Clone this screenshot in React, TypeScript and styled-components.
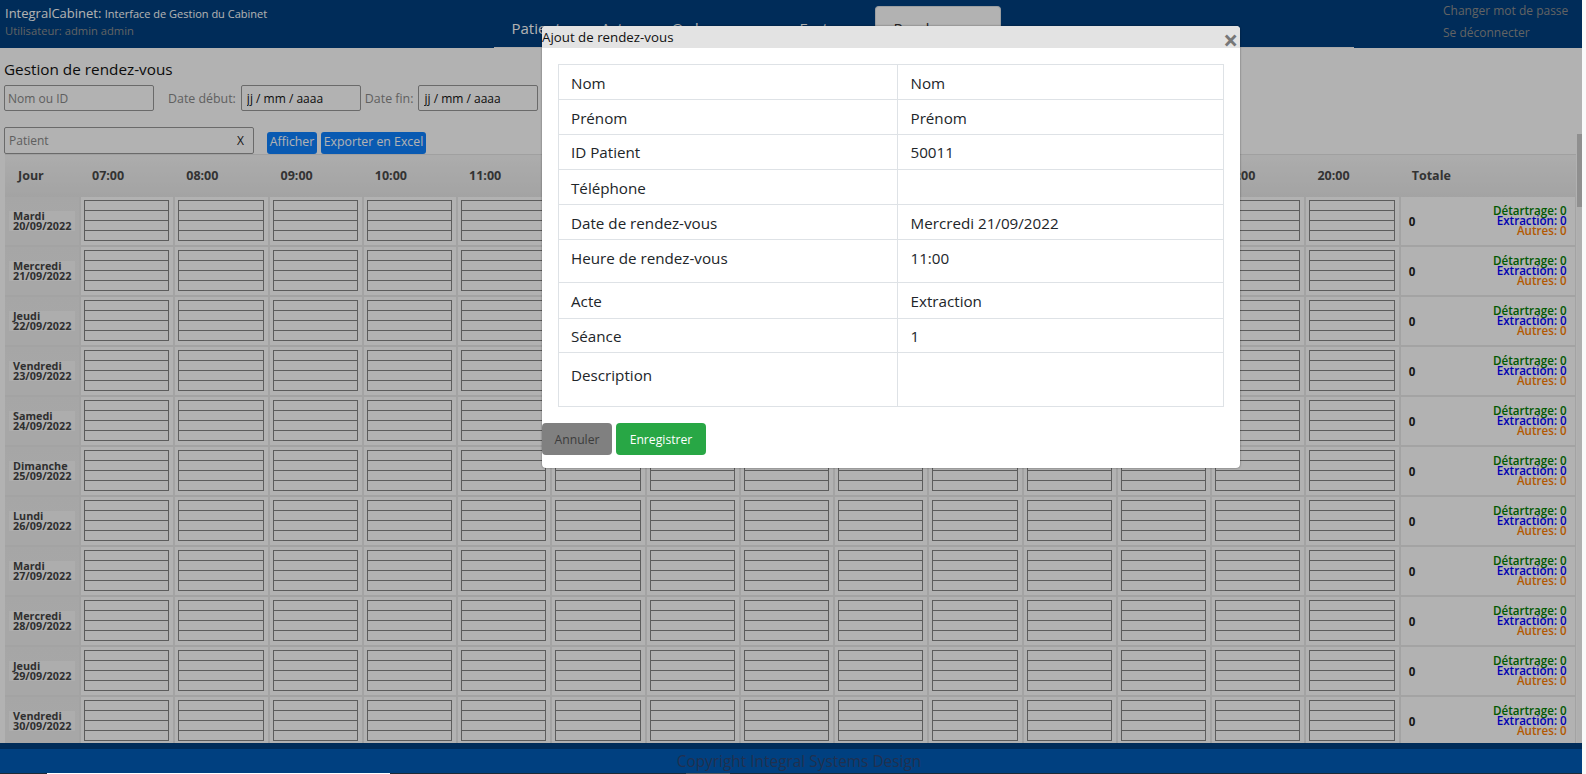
import styled, { createGlobalStyle } from 'styled-components';

const hours = ['07:00', '08:00', '09:00', '10:00', '11:00', '12:00', '13:00', '14:00', '15:00', '16:00', '17:00', '18:00', '19:00', '20:00'];

const days = [
  ['Mardi', '20/09/2022'],
  ['Mercredi', '21/09/2022'],
  ['Jeudi', '22/09/2022'],
  ['Vendredi', '23/09/2022'],
  ['Samedi', '24/09/2022'],
  ['Dimanche', '25/09/2022'],
  ['Lundi', '26/09/2022'],
  ['Mardi', '27/09/2022'],
  ['Mercredi', '28/09/2022'],
  ['Jeudi', '29/09/2022'],
  ['Vendredi', '30/09/2022'],
];

const navItems = ['Patients', 'Actes', 'Ordonnances', 'Factures'];

const details = [
  { label: 'Nom', value: 'Nom', height: 35, top: 8 },
  { label: 'Prénom', value: 'Prénom', height: 35, top: 8 },
  { label: 'ID Patient', value: '50011', height: 35, top: 7 },
  { label: 'Téléphone', value: '', height: 35, top: 8 },
  { label: 'Date de rendez-vous', value: 'Mercredi 21/09/2022', height: 35, top: 8 },
  { label: 'Heure de rendez-vous', value: '11:00', height: 43, top: 8 },
  { label: 'Acte', value: 'Extraction', height: 36, top: 8 },
  { label: 'Séance', value: '1', height: 34, top: 7 },
  { label: 'Description', value: '', height: 54, top: 12 },
];

const GlobalStyle = createGlobalStyle`
  html, body {
    margin: 0;
    height: 100%;
    overflow: hidden;
    background: #fafafa;
  }
  body, input, button {
    font-family: "Open Sans", "Noto Sans", "Liberation Sans", sans-serif;
  }
  * {
    box-sizing: border-box;
  }
`;

export default function App() {
  return (
    <>
      <GlobalStyle />
      <Page>
        <Header>
          <Brand>
            <BrandTitle>
              IntegralCabinet: <small>Interface de Gestion du Cabinet</small>
            </BrandTitle>
            <BrandUser>Utilisateur: admin admin</BrandUser>
          </Brand>
          <Nav>
            {navItems.map((item) => (
              <NavItem key={item}>{item}</NavItem>
            ))}
            <NavTab>Rendez-vous</NavTab>
          </Nav>
          <UserLinks>
            <span>Changer mot de passe</span>
            <span>Se déconnecter</span>
          </UserLinks>
        </Header>

        <Content>
          <PageTitle>Gestion de rendez-vous</PageTitle>
          <FilterRow>
            <Field $width={150} placeholder="Nom ou ID" />
            <FilterLabel $left={14}>Date début:</FilterLabel>
            <Field $width={120} $left={5} readOnly value="jj / mm / aaaa" />
            <FilterLabel $left={4}>Date fin:</FilterLabel>
            <Field $width={120} $left={5} readOnly value="jj / mm / aaaa" />
          </FilterRow>
          <ActionRow>
            <PatientBox>
              <span>Patient</span>
              <em>X</em>
            </PatientBox>
            <BlueButton $width={50}>Afficher</BlueButton>
            <BlueButton $width={105}>Exporter en Excel</BlueButton>
          </ActionRow>

          <Planning>
            <HeadRow>
              <HeadCell $pad={13}>Jour</HeadCell>
              {hours.map((hour) => (
                <HeadCell key={hour} $pad={13}>
                  {hour}
                </HeadCell>
              ))}
              <HeadCell $pad={13}>Totale</HeadCell>
            </HeadRow>
            {days.map(([name, date]) => (
              <DayRow key={date}>
                <DayCell>
                  <DayLabel>
                    {name}
                    <br />
                    {date}
                  </DayLabel>
                </DayCell>
                {hours.map((hour) => (
                  <SlotCell key={hour}>
                    <SlotBox>
                      <i />
                      <i />
                      <i />
                      <i />
                    </SlotBox>
                  </SlotCell>
                ))}
                <TotalCell>
                  <b>0</b>
                  <Stats>
                    <Stat $color="#008000">Détartrage: 0</Stat>
                    <Stat $color="#0000ff">Extraction: 0</Stat>
                    <Stat $color="#ff8000">Autres: 0</Stat>
                  </Stats>
                </TotalCell>
              </DayRow>
            ))}
          </Planning>

          <ScrollTrack>
            <ScrollArrow />
            <ScrollThumb />
          </ScrollTrack>
        </Content>

        <Footer>Copyright Integral Systems Design</Footer>
        <TaskStrip>
          <TaskWhite />
          <TaskGrey />
        </TaskStrip>

        <Backdrop />
        <Modal>
          <ModalHead>
            Ajout de rendez-vous
            <CloseMark>×</CloseMark>
          </ModalHead>
          <ModalBody>
            <DetailTable>
              <tbody>
                {details.map((row) => (
                  <DetailRow key={row.label} $height={row.height} $top={row.top}>
                    <td>{row.label}</td>
                    <td>{row.value}</td>
                  </DetailRow>
                ))}
              </tbody>
            </DetailTable>
          </ModalBody>
          <ModalActions>
            <CancelButton>Annuler</CancelButton>
            <SaveButton>Enregistrer</SaveButton>
          </ModalActions>
        </Modal>
      </Page>
    </>
  );
}

const Page = styled.div`
  position: relative;
  display: flex;
  flex-direction: column;
  width: 1582px;
  height: 774px;
  background: #fff;
  overflow: hidden;
`;

const Header = styled.header`
  display: flex;
  flex: 0 0 47px;
  background: #004080;
`;

const Brand = styled.div`
  flex: 0 0 494px;
  padding: 4px 0 0 5px;
`;

const BrandTitle = styled.div`
  font-size: 13px;
  line-height: 18px;
  color: #fff;

  small {
    font-size: 11px;
  }
`;

const BrandUser = styled.div`
  font-size: 11.2px;
  line-height: 16px;
  color: #8f8f8f;
`;

const Nav = styled.nav`
  display: flex;
  flex: 0 0 860px;
  height: 42px;
  margin-top: 6px;
  padding-left: 1px;
  border-bottom: 1px solid #f4f4f4;
`;

const NavItem = styled.div`
  padding: 12px 16.5px 0;
  font-size: 15px;
  line-height: 20px;
  color: #fff;
`;

const NavTab = styled(NavItem)`
  padding: 11px 17px 0;
  height: 42px;
  color: #333;
  background: #fff;
  border: 1px solid #dee2e6;
  border-bottom: 0;
  border-radius: 4px 4px 0 0;
`;

const UserLinks = styled.div`
  display: flex;
  flex-direction: column;
  gap: 6px;
  margin-left: 89px;
  padding-top: 3px;
  font-size: 12px;
  line-height: 16px;
  color: #8f8f8f;
  white-space: nowrap;
`;

const Content = styled.main`
  position: relative;
  flex: 0 0 695px;
  overflow: hidden;
`;

const PageTitle = styled.h1`
  margin: 11px 0 0 4px;
  font-size: 15.3px;
  font-weight: 400;
  line-height: 20px;
  color: #111;
`;

const FilterRow = styled.div`
  display: flex;
  align-items: center;
  height: 26px;
  margin: 6px 0 0 4px;
`;

const Field = styled.input<{ $width: number; $left?: number }>`
  width: ${(p) => p.$width}px;
  height: 26px;
  margin-left: ${(p) => p.$left ?? 0}px;
  padding: 0 3px;
  font-size: 12px;
  color: #111;
  background: #fff;
  border: 1px solid #999;
  border-radius: 2px;
  outline: none;

  &::placeholder {
    color: #888;
  }

  &:read-only {
    padding-left: 5px;
  }
`;

const FilterLabel = styled.label<{ $left: number }>`
  margin-left: ${(p) => p.$left}px;
  font-size: 12.4px;
  color: #8a8a8a;
  white-space: nowrap;
`;

const ActionRow = styled.div`
  display: flex;
  align-items: flex-end;
  height: 27px;
  margin: 16px 0 0 4px;
  gap: 4px;
`;

const PatientBox = styled.div`
  display: flex;
  align-items: center;
  justify-content: space-between;
  width: 250px;
  height: 27px;
  margin-right: 9px;
  padding: 0 9px 0 4px;
  font-size: 12px;
  color: #888;
  border: 1px solid #999;
  border-radius: 2px;

  em {
    font-style: normal;
    color: #222;
  }
`;

const BlueButton = styled.button<{ $width: number }>`
  width: ${(p) => p.$width}px;
  height: 22px;
  padding: 0 0 3px;
  font-size: 12.3px;
  white-space: nowrap;
  color: #fff;
  background: #0e82ff;
  border: 0;
  border-radius: 3px;
`;

const Planning = styled.div`
  width: 1571px;
  margin-left: 5px;
`;

const rowColumns = '74px repeat(14, 94.28px) 177px';

const HeadRow = styled.div`
  display: grid;
  grid-template-columns: ${rowColumns};
  height: 43px;
  background: linear-gradient(#f7f7f7, #eaeaea);
  border-top: 1px solid #e6e6e6;
`;

const HeadCell = styled.div<{ $pad: number }>`
  padding: 12px 0 0 ${(p) => p.$pad}px;
  font-size: 12.5px;
  font-weight: 700;
  line-height: 17px;
  color: #4a4a4a;
`;

const DayRow = styled.div`
  display: grid;
  grid-template-columns: ${rowColumns};
  height: 50px;
  border-bottom: 2px solid #eaeaea;
`;

const DayCell = styled.div`
  display: flex;
  align-items: center;
  padding-left: 4px;
  background: linear-gradient(#eeeeee, #f0f0f0);
`;

const DayLabel = styled.div`
  width: 66px;
  padding: 0 0 0 4px;
  font-size: 10.8px;
  font-weight: 700;
  line-height: 10px;
  white-space: nowrap;
  color: #444;
  background: #f8f8f8;
`;

const SlotCell = styled.div`
  padding: 3px 4px 0 3px;
  border-left: 2px solid #eaeaea;
`;

const SlotBox = styled.div`
  display: flex;
  flex-direction: column;
  height: 41px;
  border: 1px solid #848484;

  i {
    flex: 0 0 10px;
    border-bottom: 1px solid #848484;
  }

  i:last-child {
    flex-basis: 9px;
    border-bottom: 0;
  }
`;

const TotalCell = styled.div`
  display: flex;
  align-items: center;
  justify-content: space-between;
  padding: 0 8px;
  font-size: 11.5px;
  color: #222;
  border-left: 2px solid #eaeaea;
  border-right: 1px solid #eaeaea;
`;

const Stats = styled.div`
  text-align: right;
`;

const Stat = styled.div<{ $color: string }>`
  font-size: 11.6px;
  font-weight: 600;
  line-height: 10px;
  color: ${(p) => p.$color};
`;

const ScrollTrack = styled.div`
  position: absolute;
  top: 70px;
  right: 0;
  bottom: 0;
  width: 5px;
  background: #fbfbfb;
`;

const ScrollArrow = styled.div`
  height: 16px;
  background: #ffffff;
`;

const ScrollThumb = styled.div`
  height: 73px;
  background: #cdcdcd;
`;

const Footer = styled.footer`
  flex: 0 0 30px;
  padding: 7px 0 0 16px;
  font-size: 15.4px;
  line-height: 23px;
  text-align: center;
  color: #20304f;
  background: #004080;
`;

const TaskStrip = styled.div`
  display: flex;
  flex: 0 0 2px;
  background: #1d2b36;
`;

const TaskWhite = styled.div`
  width: 343px;
  margin-left: 47px;
  background: #fff;
`;

const TaskGrey = styled.div`
  width: 44px;
  margin-left: 296px;
  background: #555;
`;

const Backdrop = styled.div`
  position: absolute;
  inset: 0 0 25px 0;
  background: rgba(0, 0, 0, 0.3);
`;

const Modal = styled.div`
  position: absolute;
  top: 26px;
  left: 542px;
  width: 698px;
  height: 442px;
  background: #fff;
  border-radius: 4px;
  box-shadow: 0 0 2px rgba(0, 0, 0, 0.5);
`;

const ModalHead = styled.div`
  display: flex;
  justify-content: space-between;
  height: 22px;
  font-size: 13.3px;
  line-height: 22px;
  color: #111;
  background: #e3e3e3;
  border-radius: 4px 4px 0 0;
`;

const CloseMark = styled.span`
  padding: 6px 2px 0 0;
  font-size: 26px;
  font-weight: 700;
  line-height: 16px;
  color: #777;
`;

const ModalBody = styled.div`
  padding: 16px 16px 0;
`;

const DetailTable = styled.table`
  width: 665.5px;
  border-collapse: collapse;
  table-layout: fixed;
  font-size: 15.2px;
  line-height: 20px;
  color: #212529;
`;

const DetailRow = styled.tr<{ $height: number; $top: number }>`
  height: ${(p) => p.$height}px;

  td {
    padding: ${(p) => p.$top}px 12px 0;
    vertical-align: top;
    border: 1px solid #dee2e6;
  }

  td:first-child {
    width: 338.5px;
  }

  td:last-child {
    padding-left: 13px;
  }
`;

const ModalActions = styled.div`
  display: flex;
  gap: 4px;
  margin-top: 16px;
`;

const CancelButton = styled.button`
  width: 70px;
  height: 32px;
  padding: 0;
  font-size: 12.2px;
  color: #3c3c3c;
  background: #808080;
  border: 0;
  border-radius: 4px;
`;

const SaveButton = styled(CancelButton)`
  width: 90px;
  color: #fff;
  background: #28a745;
`;
